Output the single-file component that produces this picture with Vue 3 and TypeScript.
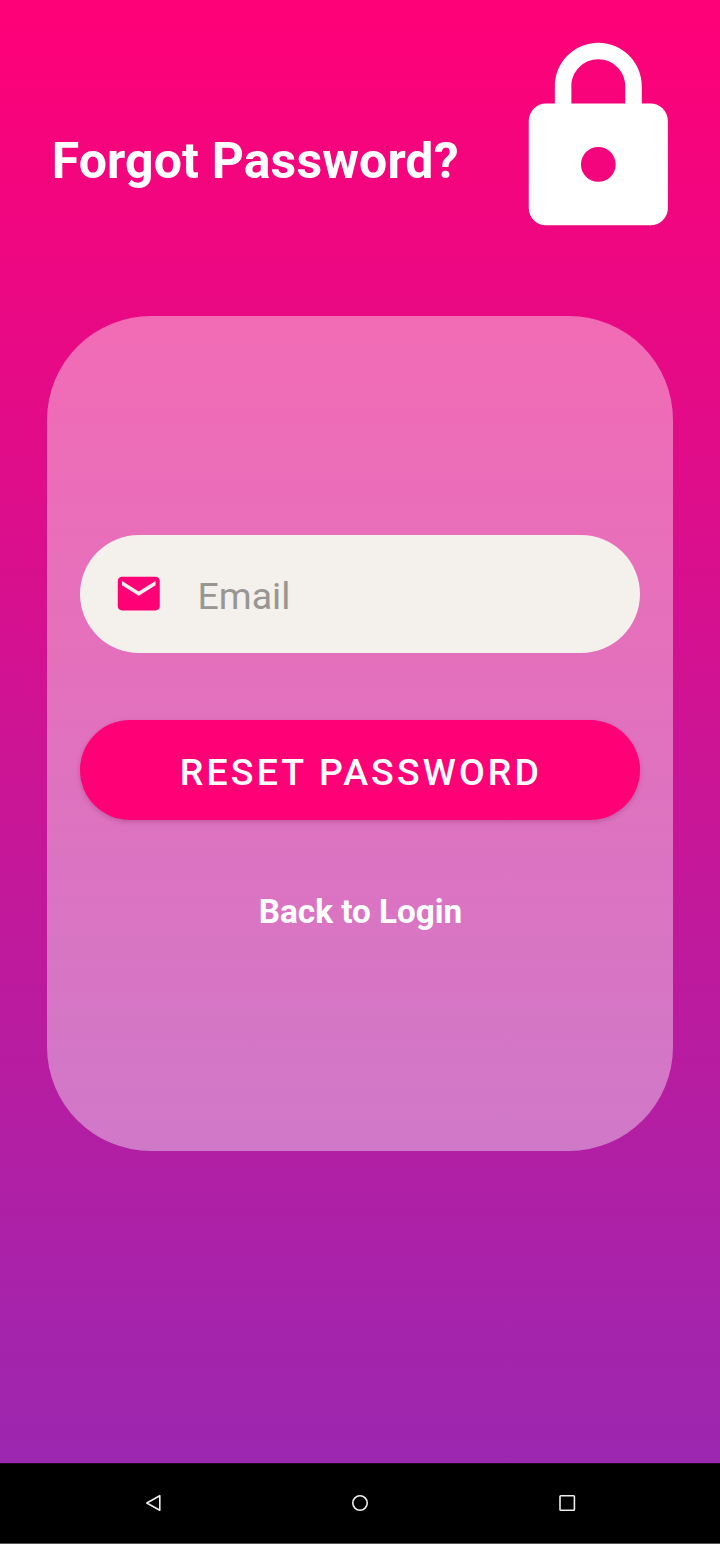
<script setup lang="ts">
import { ref } from 'vue'

const email = ref('')
</script>

<template>
  <div class="screen">
    <main class="content">
      <header class="header">
        <h1 class="title">Forgot Password?</h1>
        <svg class="lock" viewBox="0 0 24 24" aria-hidden="true">
          <path d="M18 8h-1V6c0-2.76-2.24-5-5-5S7 3.24 7 6v2H6c-1.1 0-2 .9-2 2v10c0 1.1.9 2 2 2h12c1.1 0 2-.9 2-2V10c0-1.1-.9-2-2-2zm-6 9c-1.1 0-2-.9-2-2s.9-2 2-2 2 .9 2 2-.9 2-2 2zm3.1-9H8.9V6c0-1.71 1.39-3.1 3.1-3.1 1.71 0 3.1 1.39 3.1 3.1v2z" />
        </svg>
      </header>
      <form class="card" @submit.prevent>
        <label class="field">
          <svg class="mail" viewBox="0.2 -0.2 24 24" aria-hidden="true">
            <path d="M20 4H4c-1.1 0-1.99.9-1.99 2L2 18c0 1.1.9 2 2 2h16c1.1 0 2-.9 2-2V6c0-1.1-.9-2-2-2zm0 4l-8 5-8-5V6l8 5 8-5v2z" />
          </svg>
          <input v-model="email" class="input" type="email" placeholder="Email" />
        </label>
        <button class="reset" type="submit">RESET PASSWORD</button>
        <a class="back">Back to Login</a>
      </form>
    </main>
    <nav class="navbar">
      <svg class="nav-icon" viewBox="0 0 24 24"><path d="M5.8 12 18.8 4.7v14.6z" /></svg>
      <svg class="nav-icon" viewBox="0 0 24 24"><circle cx="12" cy="12" r="7.2" /></svg>
      <svg class="nav-icon" viewBox="0 0 24 24"><rect x="5" y="4.8" width="14.4" height="14.4" rx="0.8" /></svg>
    </nav>
  </div>
</template>

<style>
body {
  margin: 0;
}
</style>

<style scoped>
.screen {
  display: flex;
  flex-direction: column;
  width: 720px;
  height: 1544px;
  overflow: hidden;
  font-family: Roboto, "Liberation Sans", sans-serif;
}
.content {
  box-sizing: border-box;
  height: 1463px;
  padding: 34px 46.7px 0;
  background: linear-gradient(#ff0077, #9c27b0);
}
.header {
  display: flex;
  align-items: flex-start;
  justify-content: space-between;
  height: 282.3px;
}
.title {
  margin: 97px 0 0 5px;
  font-size: 50px;
  line-height: 60px;
  font-weight: 700;
  letter-spacing: 0.12px;
  white-space: nowrap;
  color: #fff;
}
.lock {
  flex: none;
  width: 208.7px;
  height: 208.7px;
  margin-right: -29.2px;
  fill: #fff;
}
.card {
  box-sizing: border-box;
  display: flex;
  flex-direction: column;
  align-items: center;
  height: 835px;
  padding: 219px 33.3px 0;
  border-radius: 104px;
  background: rgba(255, 255, 255, 0.4);
}
.field {
  box-sizing: border-box;
  display: flex;
  align-items: center;
  width: 100%;
  height: 118px;
  padding-left: 33.5px;
  border-radius: 59px;
  background: #f4f0eb;
}
.mail {
  flex: none;
  width: 50.4px;
  height: 50.4px;
  margin: -2px 0 0 0.2px;
  fill: #ff0077;
}
.input {
  width: 380px;
  height: 60px;
  margin: 4px 0 0 33.4px;
  padding: 0;
  border: 0;
  outline: 0;
  background: transparent;
  font: 400 37.5px Roboto, sans-serif;
  color: #333;
}
.input::placeholder {
  color: #989693;
  opacity: 1;
}
.reset {
  flex: none;
  width: 100%;
  height: 100px;
  margin-top: 67px;
  padding: 3px 0 0 2px;
  border: 0;
  border-radius: 50px;
  background: #ff0077;
  box-shadow: 0 2px 5px rgba(80, 0, 60, 0.22);
  font: 500 37.5px Roboto, sans-serif;
  letter-spacing: 3.12px;
  color: #fff;
}
.back {
  margin-top: 72px;
  padding-left: 1px;
  font-size: 33.3px;
  line-height: 40px;
  font-weight: 700;
  letter-spacing: -0.03px;
  color: #fff;
}
.navbar {
  box-sizing: border-box;
  display: flex;
  justify-content: space-between;
  align-items: center;
  height: 81px;
  padding: 0 141px 2px;
  border-top: 1px solid #1b0a1e;
  border-bottom: 1px solid #555;
  background: #000;
}
.nav-icon {
  width: 24px;
  height: 24px;
  fill: none;
  stroke: #eee;
  stroke-width: 1.6;
  stroke-linejoin: round;
}
</style>
